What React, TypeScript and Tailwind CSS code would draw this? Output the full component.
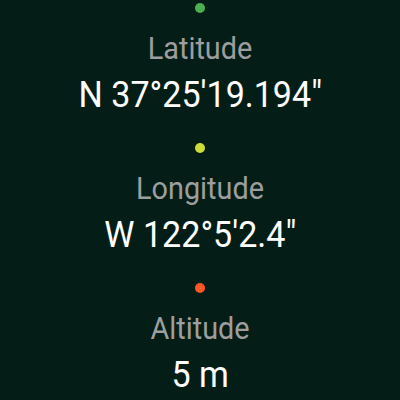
import React from "react";

type Reading = {
  label: string;
  value: string;
  dot: string;
};

const readings: Reading[] = [
  { label: "Latitude", value: "N 37°25'19.194\"", dot: "bg-[#4caf50]" },
  { label: "Longitude", value: "W 122°5'2.4\"", dot: "bg-[#cddc39]" },
  { label: "Altitude", value: "5 m", dot: "bg-[#ff5722]" },
];

function ReadingBlock({ label, value, dot }: Reading) {
  return (
    <div className="flex h-[140px] shrink-0 flex-col items-center">
      <div className={`mt-[3px] h-[10px] w-[10px] rounded-full ${dot}`} />
      <div className="mt-[15px] h-[40px] scale-x-[0.9] text-[32px] leading-[40px] text-[#9e9e9e]">
        {label}
      </div>
      <div className="mt-[5px] h-[44px] scale-x-[0.92] whitespace-nowrap text-[37px] leading-[44px] text-white">
        {value}
      </div>
    </div>
  );
}

export default function App() {
  return (
    <div
      className="flex h-[400px] w-[400px] flex-col overflow-hidden bg-[#041e17]"
      style={{ fontFamily: "Roboto, 'Liberation Sans', sans-serif" }}
    >
      {readings.map((r) => (
        <ReadingBlock key={r.label} {...r} />
      ))}
    </div>
  );
}
